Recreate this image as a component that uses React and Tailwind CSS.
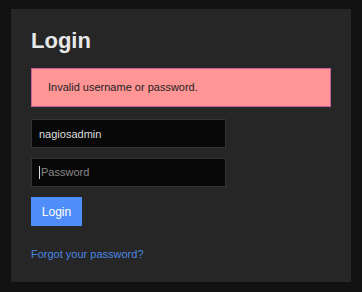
export default function App() {
  return (
    <div className="w-[362px] h-[292px] bg-[#111111] pt-[9px] pl-[11px] font-['Liberation_Sans',Arial,sans-serif]">
      <div className="w-[340px] h-[273px] bg-[#262626] pl-[20px] pt-[19px] flex flex-col">
        <h1 className="text-[22px] leading-[25px] font-bold text-[#e8e8e8] m-0">Login</h1>
        <div className="mt-[15px] w-[300px] h-[39px] bg-[#ff9595] border border-[#c95f9c] flex items-center pl-[16px] text-[11px] text-[#222222]">
          Invalid username or password.
        </div>
        <input
          className="mt-[12px] w-[195px] h-[29px] bg-[#080808] border border-[#333333] px-[7px] text-[11px] text-[#dddddd] outline-none"
          defaultValue="nagiosadmin"
        />
        <div className="mt-[10px] w-[195px] h-[29px] bg-[#080808] border border-[#333333] pl-[7px] flex items-center text-[11px] text-[#888888]">
          <span className="w-px h-[13px] bg-[#dddddd] mr-px"></span>Password
        </div>
        <button className="mt-[10px] w-[51px] h-[29px] bg-[#4f8ef8] text-white text-[12px]">Login</button>
        <a className="mt-[21px] text-[11px] text-[#4a86e2] leading-[14px]">Forgot your password?</a>
      </div>
    </div>
  );
}
